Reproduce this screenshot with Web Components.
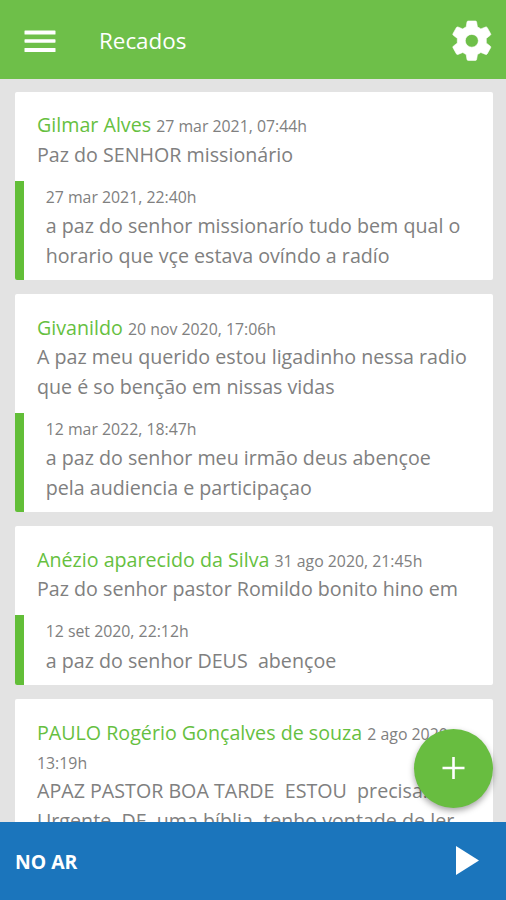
<!DOCTYPE html>
<html lang="pt-BR">
<head>
<meta charset="utf-8">
<title>Recados</title>
<style>
html, body {
    margin: 0;
    height: 100%;
    overflow: hidden;
    font-family: "Open Sans", sans-serif;
}
</style>
</head>
<body>
<recados-app></recados-app>

<script>
class AppHeader extends HTMLElement {
    constructor() {
        super();
        this.attachShadow({ mode: "open" });
        this.shadowRoot.innerHTML = /*html*/`
        <style>
        :host {
            display: flex;
            align-items: center;
            flex: none;
            height: 79px;
            padding: 2px 13px 0 24px;
            box-sizing: border-box;
            background: #6ebf49;
            color: #fff;
        }
        h1 {
            flex: 1;
            margin: 0 0 0 43px;
            font-size: 22.4px;
            line-height: 30px;
            font-weight: 400;
        }
        svg { display: block; }
        </style>
        <svg width="32" height="24" viewBox="0 0 32 24" fill="#fff">
            <rect x="0.5" y="1.5" width="31" height="4" rx="0.6"/>
            <rect x="0.5" y="10.3" width="31" height="3.4" rx="0.6"/>
            <rect x="0.5" y="19" width="31" height="4" rx="0.6"/>
        </svg>
        <h1><slot></slot></h1>
        <svg width="43" height="42" viewBox="0 0 42 42" preserveAspectRatio="none" fill="#fff">
            <path fill-rule="evenodd" stroke="#fff" stroke-width=".6" stroke-linejoin="round" d="M17.8 1h7q1 0 1.2 1l.8 5q1.7 .7 3.3 1.9l4.7-1.9q1-.3 1.5 .5l3.4 6.2q.5 .9-.3 1.5l-4 3.2q.2 2.4 0 4.6l4 3.2q.8 .6 .3 1.5l-3.4 6.2q-.5 .8-1.5 .5l-4.7-1.9q-1.6 1.2-3.3 1.9l-.8 5q-.2 1-1.2 1h-7q-1 0-1.2-1l-.8-5q-1.7-.7-3.3-1.9l-4.7 1.9q-1 .3-1.5-.5l-3.4-6.2q-.5-.9 .3-1.500l4-3.2q-.2-2.4 0-4.6l-4-3.2q-.8-.6-.3-1.5l3.4-6.2q.5-.8 1.5-.5l4.7 1.9q1.6-1.2 3.3-1.9l.8-5q.2-1 1.2-1zM21.3 14.4a6.4 6.4 0 1 0 0 12.8a6.4 6.4 0 1 0 0-12.8z"/>
        </svg>
        `;
    }
}

class RecadoCard extends HTMLElement {
    constructor() {
        super();
        this.attachShadow({ mode: "open" });
        this.shadowRoot.innerHTML = /*html*/`
        <style>
        :host {
            display: block;
            flex: none;
            background: #fff;
            border-radius: 2px;
            overflow: hidden;
            color: #808080;
            font-size: 19.66px;
            line-height: 29.4px;
            font-weight: 400;
        }
        .recado {
            padding: 18.4px 0 11.8px 22.5px;
            white-space: pre;
        }
        .nome { color: #66c03f; }
        .data {
            font-size: 15.85px;
            line-height: 1;
        }
        </style>
        <div class="recado"><span class="nome"></span> <span class="data"></span><br><slot></slot></div>
        <slot name="resposta"></slot>`;
    }
    connectedCallback() {
        this.shadowRoot.querySelector(".nome").textContent = this.getAttribute("nome");
        this.shadowRoot.querySelector(".data").textContent = this.getAttribute("data");
    }
}

class RecadoResposta extends HTMLElement {
    constructor() {
        super();
        this.attachShadow({ mode: "open" });
        this.shadowRoot.innerHTML = /*html*/`
        <style>
        :host {
            display: block;
            border-left: 9px solid #62be38;
            padding: 2.8px 0 10.2px 22.2px;
        }
        .data {
            font-size: 15.85px;
            line-height: 27.6px;
        }
        .texto { white-space: pre; }
        </style>
        <div class="data"></div>
        <div class="texto"><slot></slot></div>`;
    }
    connectedCallback() {
        this.shadowRoot.querySelector(".data").textContent = this.getAttribute("data");
    }
}

class BotaoNovo extends HTMLElement {
    constructor() {
        super();
        this.attachShadow({ mode: "open" });
        this.shadowRoot.innerHTML = /*html*/`
        <style>
        :host {
            display: flex;
            align-items: center;
            justify-content: center;
            width: 79px;
            height: 79px;
            border-radius: 50%;
            background: #68bd40;
            box-shadow: 0 3px 6px rgba(0, 0, 0, .35);
        }
        svg { margin-top: -2px; }
        </style>
        <svg width="24" height="24" viewBox="0 0 24 24" stroke="#fff" stroke-width="2.6">
            <path d="M11.5 1v22M.5 12h22"/>
        </svg>`;
    }
}

class PlayerBar extends HTMLElement {
    constructor() {
        super();
        this.attachShadow({ mode: "open" });
        this.shadowRoot.innerHTML = /*html*/`
        <style>
        :host {
            display: flex;
            align-items: center;
            justify-content: space-between;
            flex: none;
            height: 78px;
            padding: 0 27px 0 15px;
            box-sizing: border-box;
            background: #1b75bc;
            color: #fff;
            font-size: 19.4px;
            font-weight: 700;
        }
        svg { display: block; margin-top: -2px; }
        </style>
        <span><slot></slot></span>
        <svg width="23" height="29" viewBox="0 0 23 29" fill="#fff">
            <path d="M0 0L23 14.5L0 29z"/>
        </svg>`;
    }
}

class RecadosApp extends HTMLElement {
    constructor() {
        super();
        this.attachShadow({ mode: "open" });
        this.shadowRoot.innerHTML = /*html*/`
        <style>
        :host {
            display: flex;
            flex-direction: column;
            position: relative;
            width: 506px;
            height: 900px;
            background: #e3e3e3;
        }
        main {
            flex: 1;
            min-height: 0;
            overflow: hidden;
            display: flex;
            flex-direction: column;
            gap: 14px;
            padding: 13px 13.5px 0 14.5px;
        }
        /* flutua sobre a lista */
        botao-novo {
            position: absolute;
            right: 13px;
            bottom: 92px;
        }
        </style>
        <app-header>Recados</app-header>
        <main>
            <recado-card nome="Gilmar Alves" data="27 mar 2021, 07:44h">Paz do SENHOR missionário<recado-resposta slot="resposta" data="27 mar 2021, 22:40h">a paz do senhor missionarío tudo bem qual o
horario que vçe estava ovíndo a radío</recado-resposta></recado-card>
            <recado-card nome="Givanildo" data="20 nov 2020, 17:06h">A paz meu querido estou ligadinho nessa radio
que é so benção em nissas vidas<recado-resposta slot="resposta" data="12 mar 2022, 18:47h">a paz do senhor meu irmão deus abençoe
pela audiencia e participaçao</recado-resposta></recado-card>
            <recado-card nome="Anézio aparecido da Silva" data="31 ago 2020, 21:45h">Paz do senhor pastor Romildo bonito hino em<recado-resposta slot="resposta" data="12 set 2020, 22:12h">a paz do senhor DEUS  abençoe</recado-resposta></recado-card>
            <recado-card nome="PAULO Rogério Gonçalves de souza" data="2 ago 2020,
13:19h">APAZ PASTOR BOA TARDE  ESTOU  precisa...
Urgente  DE  uma bíblia  tenho vontade de ler</recado-card>
        </main>
        <botao-novo></botao-novo>
        <player-bar>NO AR</player-bar>`;
    }
}

customElements.define("app-header", AppHeader);
customElements.define("recado-card", RecadoCard);
customElements.define("recado-resposta", RecadoResposta);
customElements.define("botao-novo", BotaoNovo);
customElements.define("player-bar", PlayerBar);
customElements.define("recados-app", RecadosApp);
</script>
</body>
</html>
